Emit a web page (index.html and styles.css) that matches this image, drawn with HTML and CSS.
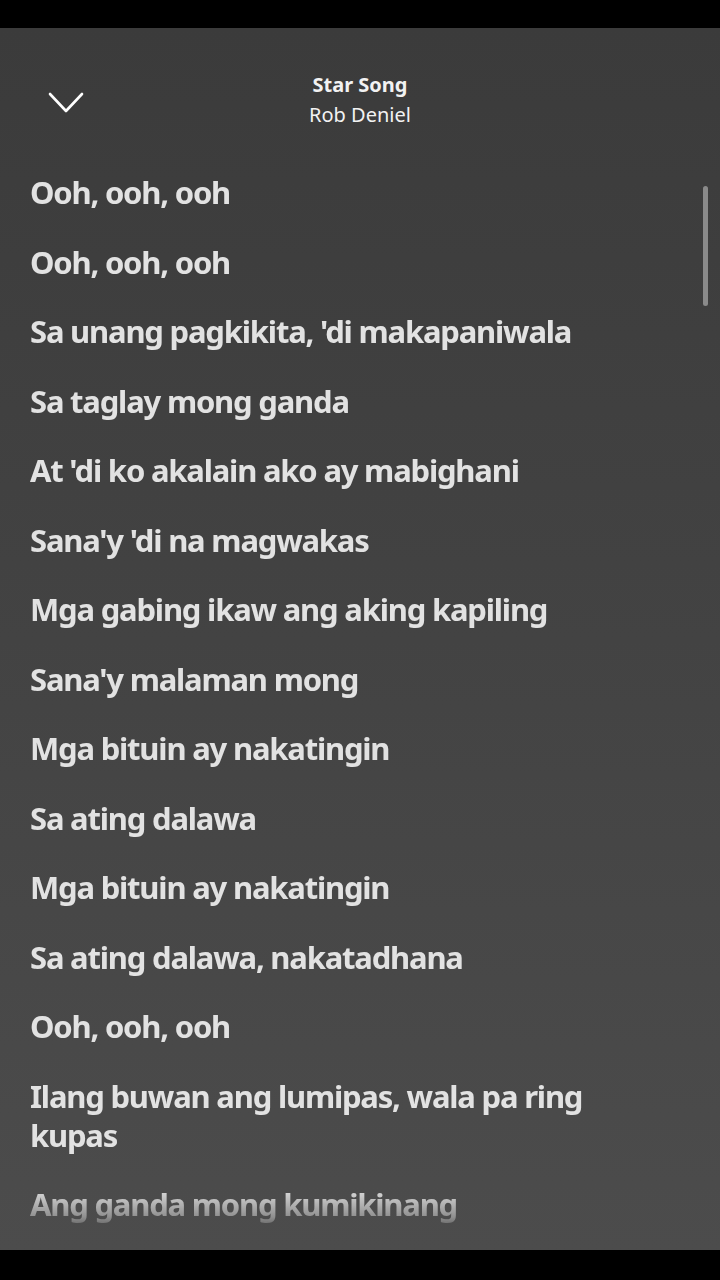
FILE: index.html
```html
<!DOCTYPE html>
<html>
<head>
<meta charset="utf-8">
<link rel="stylesheet" href="styles.css">
</head>
<body>
<div class="screen">
  <div class="bar-top"></div>
  <main class="main">
    <header class="header">
      <button class="back" aria-label="Close">
        <svg width="36" height="24" viewBox="0 0 36 24"><path d="M2 3 L18 20 L34 3" fill="none" stroke="#fff" stroke-width="2.6" stroke-linecap="round" stroke-linejoin="round"/></svg>
      </button>
      <div class="titles">
        <div class="title">Star Song</div>
        <div class="artist">Rob Deniel</div>
      </div>
    </header>
    <section class="lyrics">
      <p class="line">Ooh, ooh, ooh</p>
      <p class="line">Ooh, ooh, ooh</p>
      <p class="line">Sa unang pagkikita, 'di makapaniwala</p>
      <p class="line">Sa taglay mong ganda</p>
      <p class="line">At 'di ko akalain ako ay mabighani</p>
      <p class="line">Sana'y 'di na magwakas</p>
      <p class="line">Mga gabing ikaw ang aking kapiling</p>
      <p class="line">Sana'y malaman mong</p>
      <p class="line">Mga bituin ay nakatingin</p>
      <p class="line">Sa ating dalawa</p>
      <p class="line">Mga bituin ay nakatingin</p>
      <p class="line">Sa ating dalawa, nakatadhana</p>
      <p class="line">Ooh, ooh, ooh</p>
      <p class="line">Ilang buwan ang lumipas, wala pa ring kupas</p>
      <p class="line">Ang ganda mong kumikinang</p>
    </section>
    <div class="scrollbar"></div>
  </main>
  <div class="bar-bottom"></div>
</div>
</body>
</html>
```
FILE: styles.css
```css
* { box-sizing: border-box; }
html, body { margin: 0; padding: 0; background: #000; }
.screen {
  width: 720px;
  height: 1280px;
  display: flex;
  flex-direction: column;
  overflow: hidden;
}
.bar-top { height: 28px; background: #000; flex: none; }
.bar-bottom { height: 30px; background: #000; flex: none; }
.main {
  flex: 1;
  position: relative;
  overflow: hidden;
  background: linear-gradient(180deg, #3b3b3b 0%, #434343 50%, #4c4c4c 100%);
  display: flex;
  flex-direction: column;
  font-family: "Noto Sans", "DejaVu Sans", sans-serif;
}
.header {
  display: flex;
  align-items: flex-start;
  padding: 43px 48px 0 48px;
  height: 124px;
  flex: none;
}
.back {
  width: 36px;
  height: 24px;
  margin-top: 20px;
  padding: 0;
  border: 0;
  background: none;
  display: block;
  flex: none;
}
.back svg { display: block; }
.titles {
  flex: 1;
  text-align: center;
  color: #f2f2f2;
  margin-right: 36px;
}
.title {
  font-size: 20px;
  font-weight: 700;
  line-height: 28px;
  letter-spacing: 0;
}
.artist {
  margin-top: 2px;
  font-size: 20px;
  font-weight: 400;
  line-height: 28px;
  letter-spacing: 0;
}
.lyrics {
  padding: 21px 100px 0 30px;
  display: flex;
  flex-direction: column;
  gap: 30.5px;
  -webkit-mask-image: linear-gradient(180deg, #000 0, #000 1035px, rgba(0,0,0,0.45) 1065px, transparent 1080px);
  mask-image: linear-gradient(180deg, #000 0, #000 1035px, rgba(0,0,0,0.45) 1065px, transparent 1080px);
}
.line {
  margin: 0;
  font-size: 31px;
  font-weight: 700;
  line-height: 39px;
  letter-spacing: -1.2px;
  color: #e2e2e2;
}
.scrollbar {
  position: absolute;
  right: 12px;
  top: 158px;
  width: 5px;
  height: 120px;
  border-radius: 3px;
  background: #8a8a8a;
}
```
